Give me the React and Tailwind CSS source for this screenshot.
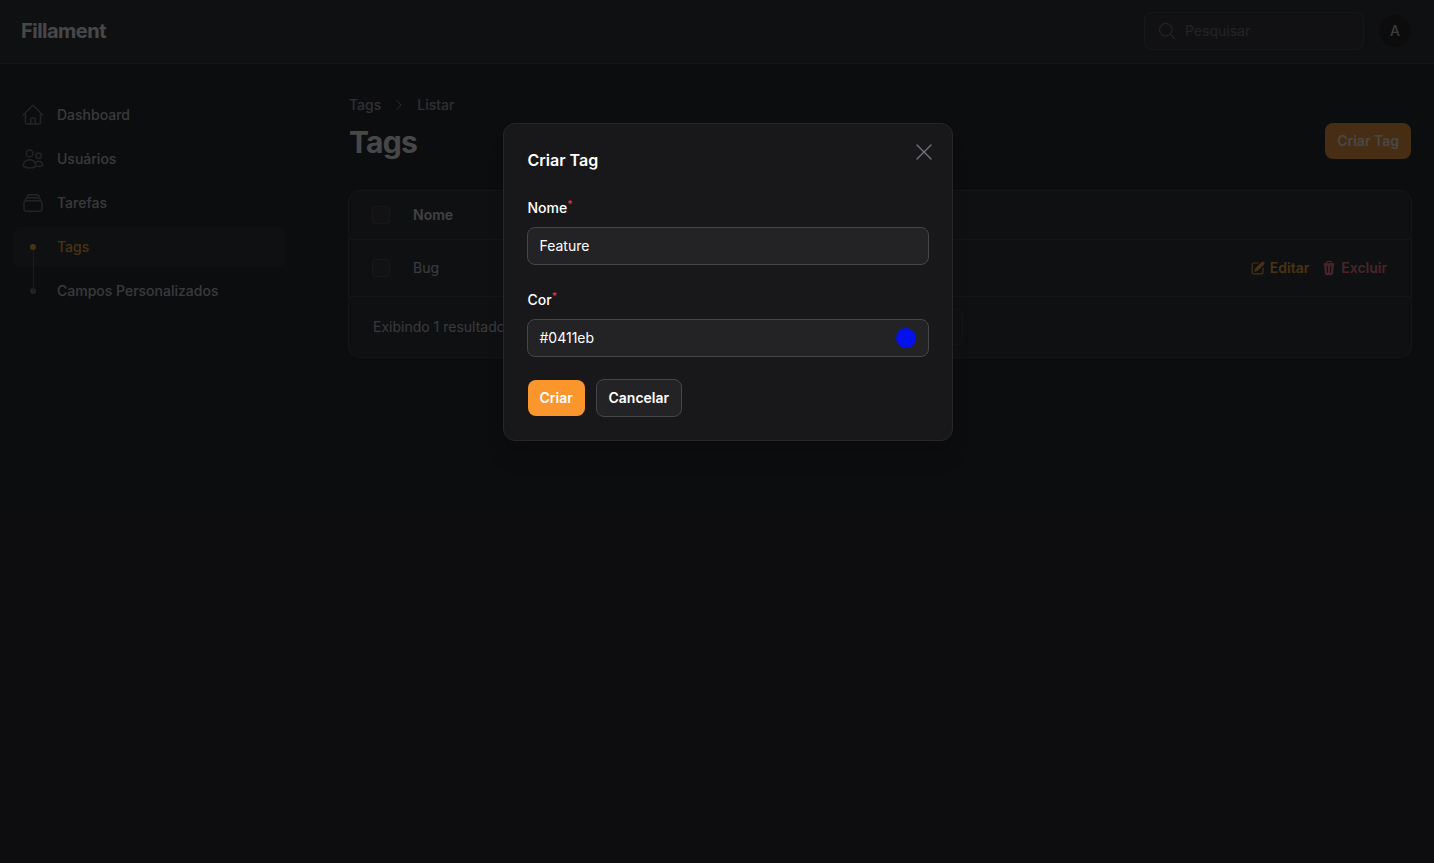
import {
  HiMiniPencilSquare,
  HiMiniTrash,
  HiOutlineChevronRight,
  HiOutlineHome,
  HiOutlineMagnifyingGlass,
  HiOutlineRectangleStack,
  HiOutlineUsers,
  HiOutlineXMark,
} from "react-icons/hi2";

const navItems = [
  { label: "Dashboard", icon: HiOutlineHome },
  { label: "Usuários", icon: HiOutlineUsers },
  { label: "Tarefas", icon: HiOutlineRectangleStack },
];

const Sidebar = () => (
  <aside className="w-[300px] shrink-0 pl-[13px] pr-[14px] pt-[31px]">
    <nav className="flex flex-col gap-1">
      {navItems.map(({ label, icon: Icon }) => (
        <a key={label} className="flex h-10 items-center gap-3 px-2 text-sm font-medium text-[#c8c8cc]">
          <Icon className="h-6 w-6 text-[#71717a]" />
          <span>{label}</span>
        </a>
      ))}
      <a className="relative flex h-10 items-center gap-3 rounded-lg bg-white/5 px-2 text-sm font-medium text-[#ffb02e]">
        <span className="flex h-6 w-6 items-center justify-center">
          <span className="h-1.5 w-1.5 rounded-full bg-[#ffb02e]" />
        </span>
        <span>Tags</span>
        {/* Line joining the two sub items */}
        <span className="absolute left-[20px] top-[23px] h-[41px] w-px bg-[#52525b]" />
      </a>
      <a className="flex h-10 items-center gap-3 px-2 text-sm font-medium text-[#c8c8cc]">
        <span className="flex h-6 w-6 items-center justify-center">
          <span className="h-1.5 w-1.5 rounded-full bg-[#71717a]" />
        </span>
        <span>Campos Personalizados</span>
      </a>
    </nav>
  </aside>
);

const Topbar = () => (
  <header className="flex h-16 items-center justify-between border-b border-white/10 bg-[#232426] pb-px pl-[21px] pr-[23px]">
    <span className="text-xl font-bold leading-5 tracking-tight text-white">Fillament</span>
    <div className="flex items-center gap-[15px]">
      <div className="flex h-[38px] w-[220px] items-center gap-2 rounded-lg border border-white/10 bg-white/[0.03] px-3">
        <HiOutlineMagnifyingGlass className="h-5 w-5 text-[#71717a]" />
        <span className="text-sm text-[#71717a]">Pesquisar</span>
      </div>
      <div className="flex h-8 w-8 items-center justify-center rounded-full bg-[#141416] text-sm font-medium text-[#d4d4d8]">A</div>
    </div>
  </header>
);

const Table = () => (
  <section className="mt-[30px] overflow-hidden rounded-xl border border-white/10 bg-[#232426]">
    <div className="flex h-[49px] items-center gap-[23px] border-b border-white/10 pl-[23px] pr-6">
      <span className="h-[18px] w-[18px] rounded border border-white/10 bg-white/5" />
      <span className="text-sm font-semibold text-[#e4e4e7]">Nome</span>
    </div>
    <div className="flex h-[57px] items-center border-b border-white/10 pl-[23px] pr-6">
      <span className="h-[18px] w-[18px] rounded border border-white/10 bg-white/5" />
      <span className="ml-[23px] flex-1 text-sm text-[#d4d4d8]">Bug</span>
      <div className="flex items-center gap-3 text-sm font-semibold">
        <span className="flex items-center gap-1 text-[#ffb02e]">
          <HiMiniPencilSquare className="h-4 w-4" />
          Editar
        </span>
        <span className="flex items-center gap-1 text-[#ff7a88]">
          <HiMiniTrash className="h-4 w-4" />
          Excluir
        </span>
      </div>
    </div>
    <div className="relative flex h-[60px] items-center px-6">
      <span className="text-sm text-[#c8c8cc]">Exibindo 1 resultado</span>
      <div className="absolute left-[448px] top-[12px] flex h-9 w-[166px] items-center rounded-lg border border-white/10 px-3 text-sm text-[#c8c8cc]">
        Por página
      </div>
    </div>
  </section>
);

const Field = ({ label, value, children }) => (
  <div>
    <label className="block text-sm font-medium leading-6 text-white">
      {label}
      <sup className="font-medium text-[#d93a48]">*</sup>
    </label>
    <div className="-mx-px mt-[7px] flex h-[38px] items-center justify-between rounded-lg border border-[#45454a] bg-[#232326] px-3">
      <span className="text-sm text-white">{value}</span>
      {children}
    </div>
  </div>
);

const CreateTagModal = () => (
  <div className="absolute inset-0 flex justify-center bg-[#09090b]/75 pl-[21px] pt-[123px]">
    <div className="h-[318px] w-[450px] rounded-xl border border-[#27272a] bg-[#18181b] px-6 pt-6 shadow-xl">
      <div className="flex items-start justify-between">
        <h2 className="text-base font-semibold leading-6 text-white">Criar Tag</h2>
        <HiOutlineXMark className="-mr-[10px] -mt-[10px] h-7 w-7 text-[#71717a]" strokeWidth={1.2} />
      </div>
      <div className="mt-6 flex flex-col gap-[23px]">
        <Field label="Nome" value="Feature" />
        <Field label="Cor" value="#0411eb">
          <span className="h-5 w-5 rounded-full bg-[#0411eb]" />
        </Field>
      </div>
      <div className="mt-[22px] flex items-center gap-[11px]">
        <button className="h-9 rounded-lg bg-[#fb962c] px-3 text-sm font-semibold text-white">Criar</button>
        <button className="h-[38px] w-[86px] rounded-lg border border-[#45454a] bg-[#232326] text-sm font-semibold text-white">Cancelar</button>
      </div>
    </div>
  </div>
);

export default function App() {
  return (
    <div className="relative h-[863px] overflow-hidden bg-[#17181a] font-['Inter',sans-serif] antialiased">
      <Topbar />
      <div className="flex">
        <Sidebar />
        <main className="flex-1 pl-[48px] pr-[22px] pt-[31px]">
          <div className="flex items-start justify-between">
            <div className="ml-px">
              <div className="flex h-5 items-center gap-[11px] text-sm font-medium text-[#a1a1aa]">
                <span>Tags</span>
                <HiOutlineChevronRight className="h-3.5 w-3.5 text-[#a1a1aa]" />
                <span>Listar</span>
              </div>
              <h1 className="mt-[9px] text-3xl font-bold leading-9 tracking-tight text-white">Tags</h1>
            </div>
            <button className="mr-px mt-[28px] h-9 rounded-lg bg-[#fb962c] px-3 text-sm font-semibold text-white">Criar Tag</button>
          </div>
          <Table />
        </main>
      </div>
      <CreateTagModal />
    </div>
  );
}
